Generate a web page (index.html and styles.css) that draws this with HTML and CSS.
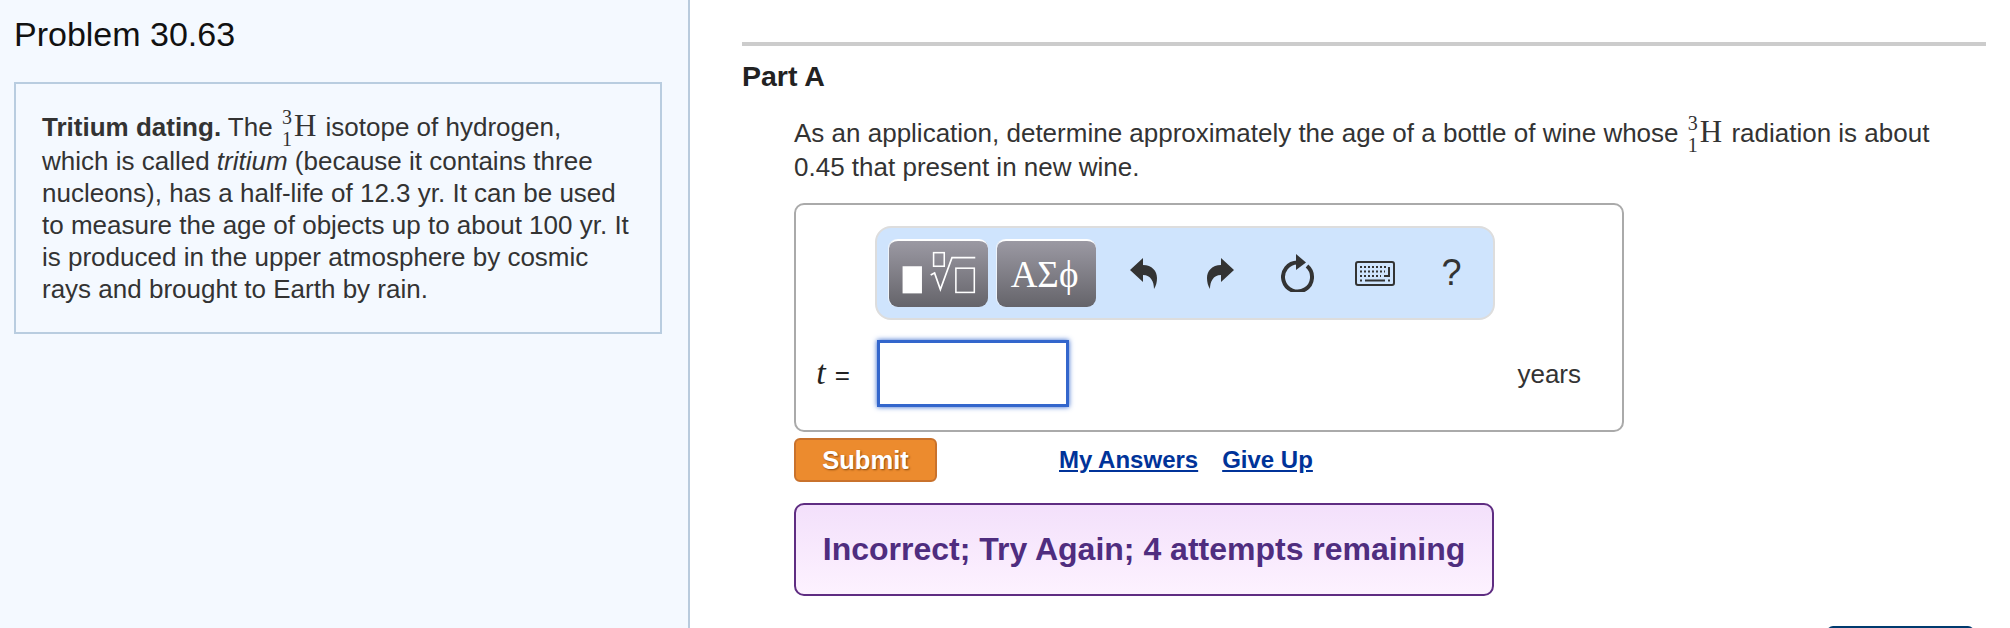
FILE: index.html
```html
<!DOCTYPE html>
<html lang="en">
<head>
    <meta charset="UTF-8">
    <meta name="viewport" content="width=device-width, initial-scale=1.0">
    <title>Problem 30.63</title>
    <link rel="stylesheet" href="styles.css">
</head>
<body>
    <div class="left-panel">
        <h1 class="problem-title">Problem 30.63</h1>
        <div class="intro-box">
            <p><strong>Tritium dating.</strong> The <span class="isotope"><span class="scripts"><span>3</span><span>1</span></span>H</span> isotope of hydrogen, which is called <em>tritium</em> (because it contains three nucleons), has a half-life of 12.3 yr. It can be used to measure the age of objects up to about 100 yr. It is produced in the upper atmosphere by cosmic rays and brought to Earth by rain.</p>
        </div>
    </div>

    <div class="right-panel">
        <div class="part-rule"></div>
        <h2 class="part-title">Part A</h2>
        <div class="part-body">
            <p class="question">As an application, determine approximately the age of a bottle of wine whose <span class="isotope"><span class="scripts"><span>3</span><span>1</span></span>H</span> radiation is about 0.45 that present in new wine.</p>

            <div class="answer-box">
                <div class="toolbar">
                    <button class="tool-btn" aria-label="Templates">
                        <svg width="98" height="66" viewBox="0 0 98 66">
                            <rect x="14" y="25" width="20" height="28" fill="#fff"/>
                            <rect x="46" y="11" width="11" height="14" fill="none" stroke="#fff" stroke-width="1.6"/>
                            <path d="M43 34 L47 32 L53 49 L65 16 H89" fill="none" stroke="#fff" stroke-width="1.8"/>
                            <rect x="69" y="27" width="19" height="25" fill="none" stroke="#fff" stroke-width="1.6"/>
                        </svg>
                    </button>
                    <button class="tool-btn tool-greek">ΑΣϕ</button>
                    <span class="tool-icon">
                        <svg width="27" height="32" viewBox="0 0 27 32"><path d="M0 13 L13 1 V8 C22 8 27 14 27 21 C27 25 26 29 24 32 C24 25 21 18 13 18 V25 Z" fill="#333"/></svg>
                    </span>
                    <span class="tool-icon">
                        <svg width="27" height="32" viewBox="0 0 27 32"><path d="M27 13 L14 1 V8 C5 8 0 14 0 21 C0 25 1 29 3 32 C3 25 6 18 14 18 V25 Z" fill="#333"/></svg>
                    </span>
                    <span class="tool-icon">
                        <svg width="34" height="38" viewBox="0 0 34 38"><path d="M26 12 A14.500 14.500 0 1 1 17 8.500" fill="none" stroke="#333" stroke-width="4"/><path d="M15 0 L25 8.500 L15 16 Z" fill="#333"/></svg>
                    </span>
                    <span class="tool-icon">
                        <svg width="40" height="25" viewBox="0 0 40 25">
                            <rect x="1" y="1" width="38" height="23" rx="2" fill="none" stroke="#333" stroke-width="2"/>
                            <path d="M5 6 H33 M5 10.500 H30 M5 15 H26" stroke="#333" stroke-width="2" stroke-dasharray="2 2" fill="none"/>
                            <path d="M34 6 V15 H29 M10 19.500 H30" stroke="#333" stroke-width="2" fill="none"/>
                            <path d="M5 19.500 H7 M33 19.500 H35" stroke="#333" stroke-width="2" fill="none"/>
                        </svg>
                    </span>
                    <span class="tool-icon tool-help">?</span>
                </div>
                <div class="answer-row">
                    <span class="answer-label"><i>t</i> =</span>
                    <input class="answer-input" type="text">
                    <span class="answer-units">years</span>
                </div>
            </div>

            <div class="action-row">
                <button class="submit-btn">Submit</button>
                <a class="action-link" href="#">My Answers</a>
                <a class="action-link" href="#">Give Up</a>
            </div>

            <div class="feedback">Incorrect; Try Again; 4 attempts remaining</div>
        </div>
        <div class="next-row"><div class="next-btn"></div></div>
    </div>
</body>
</html>
```

FILE: styles.css
```css
* {
    box-sizing: border-box;
}

html, body {
    margin: 0;
    height: 628px;
    overflow: hidden;
}

body {
    display: flex;
    background-color: #fff;
    color: #333;
    font-family: "Liberation Sans", Arial, sans-serif;
    font-size: 26px;
    line-height: 32px;
}

p {
    margin: 0;
}

.left-panel {
    flex: 0 0 690px;
    padding: 14px 26px 0 14px;
    background-color: #f4f9ff;
    border-right: 2px solid #b9cbdd;
}

.problem-title {
    margin: 0 0 28px;
    color: #111;
    font-size: 34px;
    font-weight: normal;
    line-height: 40px;
}

.intro-box {
    height: 252px;
    padding: 26px 28px 0 26px;
    border: 2px solid #b9cde0;
}

.isotope {
    margin-right: 2px;
    font-family: "Liberation Serif", serif;
    font-size: 31px;
    line-height: 1;
}

.scripts {
    display: inline-flex;
    flex-direction: column;
    align-items: center;
    margin: -14px 2px -5px 2px;
    font-size: 20px;
    line-height: 22px;
    vertical-align: 12px;
}

.right-panel {
    flex: 1;
    padding: 42px 24px 0 52px;
}

.part-rule {
    height: 4px;
    background-color: #ccc;
}

.part-title {
    margin: 14px 0 0;
    color: #222;
    font-size: 28.5px;
    line-height: 32px;
}

.part-body {
    margin: 24px 0 0 52px;
}

.question {
    max-width: 1150px;
    line-height: 32px;
}

.answer-box {
    width: 830px;
    margin-top: 20px;
    padding: 21px 0 23px;
    border: 2px solid #aaa;
    border-radius: 10px;
    background-color: #fff;
}

.toolbar {
    display: flex;
    align-items: center;
    width: 620px;
    height: 94px;
    margin-left: 79px;
    padding-left: 12px;
    background-color: #cfe4fd;
    border: 2px solid #ddd;
    border-radius: 16px;
}

.tool-btn {
    display: flex;
    align-items: center;
    justify-content: center;
    width: 99px;
    height: 68px;
    margin-right: 9px;
    padding: 0 4px 0 0;
    color: #fff;
    background: linear-gradient(#9b99a3, #65646a);
    border: none;
    border-top: 2px solid #fff;
    border-radius: 9px;
    box-shadow: -1px 0 0 #eef4fb;
}

.tool-greek {
    font-family: "Liberation Serif", serif;
    font-size: 37px;
}

.tool-icon {
    display: flex;
    justify-content: center;
    width: 77px;
}

.tool-help {
    color: #333;
    font-size: 36px;
    line-height: 40px;
}

.answer-row {
    display: flex;
    align-items: center;
    margin-top: 20px;
    padding-right: 41px;
}

.answer-label {
    width: 81px;
    padding-right: 27px;
    text-align: right;
    color: #222;
}

.answer-label i {
    margin-right: 2px;
    font-family: "Liberation Serif", serif;
    font-size: 34px;
}

.answer-input {
    width: 192px;
    height: 67px;
    border: 3px solid #3366cc;
    background-color: #fff;
    box-shadow: 0 0 5px #3366cc;
    outline: none;
}

.answer-units {
    margin-left: auto;
}

.action-row {
    display: flex;
    align-items: center;
    margin-top: 6px;
}

.submit-btn {
    width: 143px;
    height: 44px;
    margin-right: 122px;
    padding: 0;
    color: #fff;
    background-color: #ec8b2e;
    border: 2px solid #c9722c;
    border-radius: 6px;
    font-family: inherit;
    font-size: 25.6px;
    font-weight: bold;
    text-shadow: 1px 1px 2px #8a4a10;
}

.action-link {
    margin-right: 24px;
    color: #003399;
    font-size: 24px;
    font-weight: bold;
}

.feedback {
    width: 700px;
    height: 93px;
    margin-top: 21px;
    color: #4f2d7f;
    background: linear-gradient(#f3e0fb, #fdf2ff);
    border: 2px solid #5f2d82;
    border-radius: 10px;
    font-size: 32px;
    font-weight: bold;
    line-height: 89px;
    text-align: center;
}

.next-row {
    display: flex;
    justify-content: flex-end;
    margin-top: 30px;
    padding-right: 12px;
}

.next-btn {
    width: 147px;
    height: 44px;
    background-color: #003a6e;
    border-radius: 6px;
}
```
